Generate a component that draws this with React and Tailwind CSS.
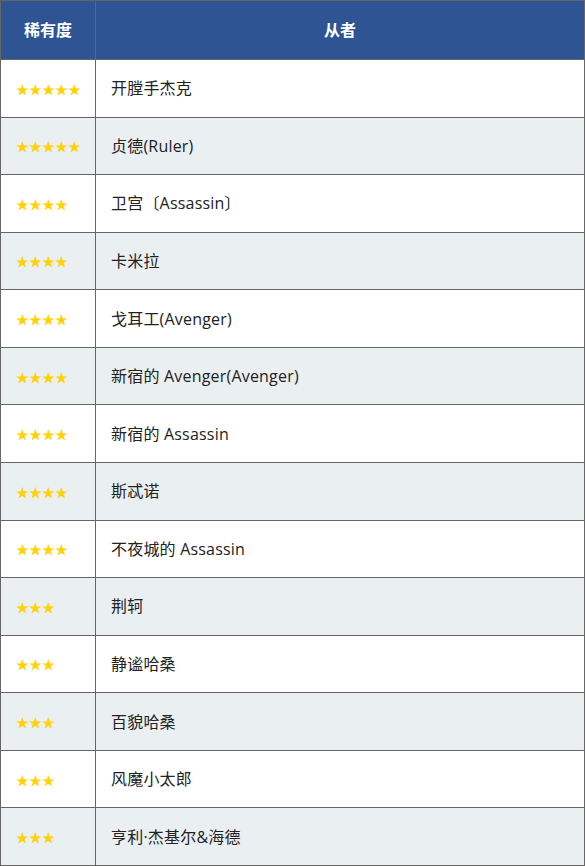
const rows = [
  [5, "开膛手杰克"],
  [5, "贞德(Ruler)"],
  [4, "卫宫〔Assassin〕"],
  [4, "卡米拉"],
  [4, "戈耳工(Avenger)"],
  [4, "新宿的 Avenger(Avenger)"],
  [4, "新宿的 Assassin"],
  [4, "斯忒诺"],
  [4, "不夜城的 Assassin"],
  [3, "荆轲"],
  [3, "静谧哈桑"],
  [3, "百貌哈桑"],
  [3, "风魔小太郎"],
  [3, "亨利·杰基尔&海德"],
];

export default function App() {
  return (
    <div
      className="w-[585px] h-[866px] bg-[#666666] border border-[#666666] grid grid-cols-[94px_488px] grid-rows-[58px_repeat(14,1fr)] gap-px"
      style={{ fontFamily: '"Open Sans", "Noto Sans CJK SC", sans-serif' }}
    >
      <div className="bg-[#2e5494] text-white font-bold text-[16px] flex items-center justify-center">稀有度</div>
      <div className="bg-[#2e5494] text-white font-bold text-[16px] flex items-center justify-center">从者</div>
      {rows.map(([n, name], i) => {
        const bg = i % 2 === 0 ? "bg-white" : "bg-[#eaeff2]";
        return [
          <div key={"s" + i} className={`${bg} flex items-center pl-[15px] text-[#ffd200] text-[13px] leading-none`} style={{ fontFamily: '"Noto Sans CJK SC", sans-serif' }}>
            {"★".repeat(n)}
          </div>,
          <div key={"n" + i} className={`${bg} flex items-center pl-[15px] text-[#222222] text-[16px] tracking-[0.2px]`}>
            {name}
          </div>,
        ];
      })}
    </div>
  );
}
